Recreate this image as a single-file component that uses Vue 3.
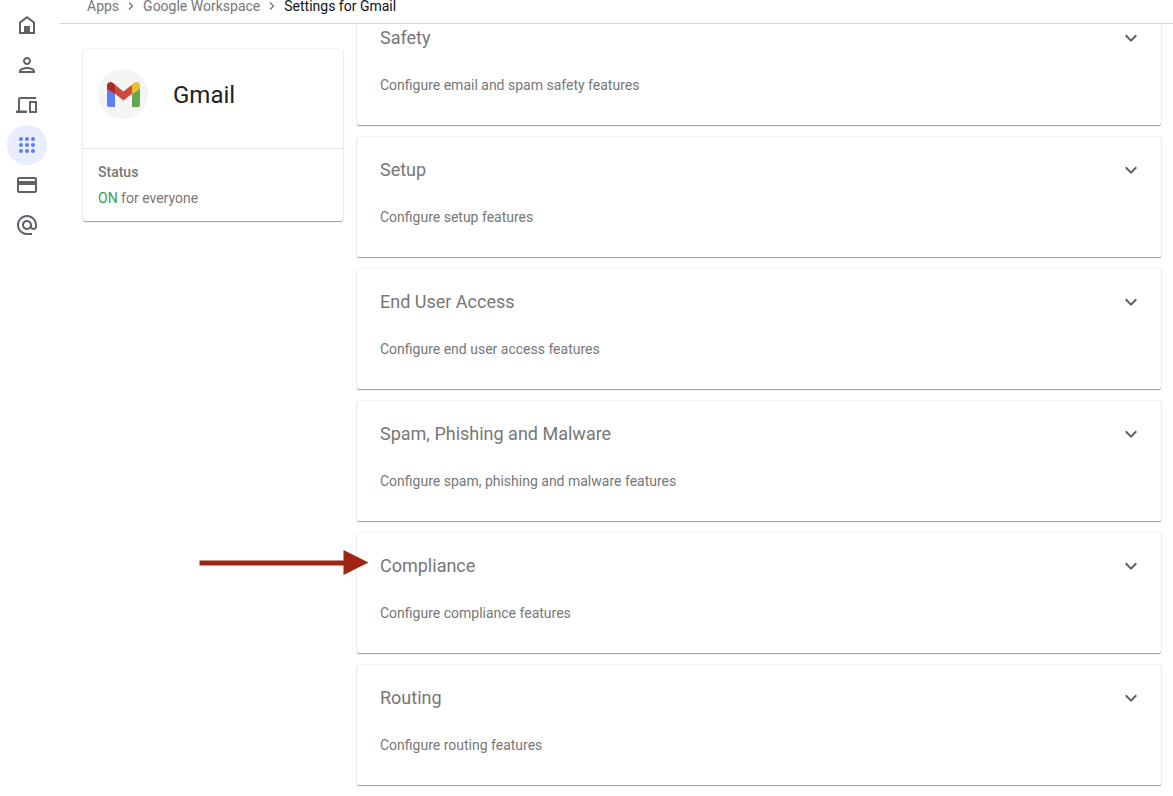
<script setup>
import { ref } from 'vue'

const navItems = [
  { label: 'Home', paths: ['M12 3L4 9v12h16V9l-8-6zm6 16h-3v-6H9v6H6v-9l6-4.500 6 4.500v9z'] },
  { label: 'Directory', paths: ['M12 6c1.100 0 2 .9 2 2s-.9 2-2 2-2-.9-2-2 .9-2 2-2m0 10c2.700 0 5.800 1.290 6 2H6c.23-.72 3.310-2 6-2m0-12C9.790 4 8 5.790 8 8s1.790 4 4 4 4-1.790 4-4-1.790-4-4-4zm0 10c-2.670 0-8 1.340-8 4v2h16v-2c0-2.660-5.330-4-8-4z'] },
  { label: 'Devices', paths: ['M5 6h16V4H5c-1.100 0-2 .9-2 2v11.500H1V20h11v-2.500H5V6zm16 2h-6c-.55 0-1 .45-1 1v10c0 .55.45 1 1 1h6c.55 0 1-.45 1-1V9c0-.55-.45-1-1-1zm-1 10h-4v-8h4v8z'] },
  { label: 'Apps', active: true },
  { label: 'Billing', paths: ['M20 4H4c-1.110 0-1.990.89-1.990 2L2 18c0 1.110.89 2 2 2h16c1.110 0 2-.89 2-2V6c0-1.110-.89-2-2-2zm0 14H4v-6h16v6zm0-10H4V6h16v2z'] },
  { label: 'Account', paths: ['M12 2C6.480 2 2 6.480 2 12s4.480 10 10 10h5v-2h-5c-4.340 0-8-3.660-8-8s3.660-8 8-8 8 3.660 8 8v1.430c0 .79-.71 1.570-1.500 1.570s-1.500-.78-1.500-1.570V12c0-2.760-2.240-5-5-5s-5 2.240-5 5 2.240 5 5 5c1.380 0 2.640-.56 3.540-1.470.65.89 1.770 1.470 2.960 1.470 1.970 0 3.500-1.600 3.500-3.570V12c0-5.520-4.480-10-10-10zm0 13c-1.660 0-3-1.340-3-3s1.340-3 3-3 3 1.340 3 3-1.340 3-3 3z'] },
]

const dots = [6, 12, 18].flatMap((cy) => [6, 12, 18].map((cx) => ({ cx, cy })))

const sections = [
  { title: 'Safety', text: 'Configure email and spam safety features' },
  { title: 'Setup', text: 'Configure setup features' },
  { title: 'End User Access', text: 'Configure end user access features' },
  { title: 'Spam, Phishing and Malware', text: 'Configure spam, phishing and malware features' },
  { title: 'Compliance', text: 'Configure compliance features', marked: true },
  { title: 'Routing', text: 'Configure routing features' },
]

const openSection = ref('')
function toggle(title) {
  openSection.value = openSection.value === title ? '' : title
}
</script>

<template>
  <div class="shell">
    <nav class="rail" aria-label="Main">
      <a v-for="item in navItems" :key="item.label" href="#" class="rail-link" :class="{ active: item.active }" :aria-label="item.label">
        <svg viewBox="0 0 24 24" class="rail-icon" aria-hidden="true">
          <template v-if="item.active">
            <circle v-for="(d, i) in dots" :key="i" :cx="d.cx" :cy="d.cy" r="2" />
          </template>
          <path v-for="p in item.paths" :key="p" :d="p" />
        </svg>
      </a>
    </nav>

    <div class="page">
      <header class="topbar">
        <nav class="crumbs" aria-label="Breadcrumb">
          <a href="#">Apps</a>
          <svg class="sep" viewBox="0 0 8 10" aria-hidden="true"><path d="M2 1.500 5.500 5 2 8.500" /></svg>
          <a href="#">Google Workspace</a>
          <svg class="sep" viewBox="0 0 8 10" aria-hidden="true"><path d="M2 1.500 5.500 5 2 8.500" /></svg>
          <span class="current">Settings for Gmail</span>
        </nav>
      </header>

      <main class="content">
        <aside class="card app-card">
          <div class="app-head">
            <div class="logo">
              <svg viewBox="0 0 33 25" aria-hidden="true">
                <path fill="#5f80f4" d="M0 6l8 6v13H2a2 2 0 0 1-2-2z" />
                <path fill="#5fa854" d="M33 6l-8 6v13h6a2 2 0 0 0 2-2z" />
                <path fill="#cf4a3c" d="M7 2l9.500 7.500L26 2v9l-9.500 7.500L7 11z" />
                <path fill="#ad2a27" d="M0 7V3.500C0 .5 3.500-1 6 1l2 1.500V12z" />
                <path fill="#edc02b" d="M33 7V3.500C33 .5 29.500-1 27 1l-2 1.500V12z" />
              </svg>
            </div>
            <h1>Gmail</h1>
          </div>
          <div class="app-status">
            <h2>Status</h2>
            <p><span class="on">ON</span> for everyone</p>
          </div>
        </aside>

        <div class="sections">
          <section v-for="s in sections" :key="s.title" class="card section">
            <button type="button" class="section-head" :aria-expanded="openSection === s.title" @click="toggle(s.title)">
              <span>{{ s.title }}</span>
              <svg viewBox="0 0 24 24" class="chevron" aria-hidden="true"><path d="M7.410 8.590 12 13.170l4.590-4.580L18 10l-6 6-6-6z" /></svg>
            </button>
            <p>{{ s.text }}</p>
            <svg v-if="s.marked" class="arrow" viewBox="0 0 170 26" aria-hidden="true">
              <path d="M.5 10.500h144V0l25 12.500-25 12.500V15.500H.5z" />
            </svg>
          </section>
        </div>
      </main>
    </div>
  </div>
</template>

<style>
body {
  margin: 0;
  background: #fff;
}
</style>

<style scoped>
.shell {
  display: flex;
  height: 100vh;
  overflow: hidden;
  font-family: Roboto, "Liberation Sans", sans-serif;
  font-size: 14px;
  line-height: 20px;
  color: #777;
}
.rail {
  flex: none;
  display: flex;
  flex-direction: column;
  width: 52px;
  padding: 5px 0 0 7px;
}
.rail-link {
  display: flex;
  align-items: center;
  justify-content: center;
  width: 40px;
  height: 40px;
  border-radius: 50%;
}
.rail-link.active {
  background: #e8eefd;
}
.rail-icon {
  width: 24px;
  height: 24px;
  fill: #5f6368;
}
.active .rail-icon {
  fill: #5b7ff5;
}
.page {
  flex: 1;
  min-width: 0;
  display: flex;
  flex-direction: column;
}
.topbar {
  flex: none;
  padding: 0 28px 11px;
  border-bottom: 1px solid #dadada;
}
.crumbs {
  display: flex;
  align-items: center;
  gap: 8px;
  line-height: 12px;
}
.crumbs a {
  color: #777;
  text-decoration: none;
}
.sep {
  width: 8px;
  height: 10px;
  fill: none;
  stroke: #757575;
  stroke-width: 1.3;
}
.crumbs .current {
  color: #111;
}
.content {
  flex: 1;
  min-height: 0;
  display: flex;
  align-items: flex-start;
  gap: 14px;
  padding: 0 12px 0 24px;
  overflow: hidden;
}
.card {
  background: #fff;
  border-radius: 2px;
  box-shadow: 0 1px 1px rgba(0, 0, 0, 0.36), 0 0 2px rgba(0, 0, 0, 0.16);
}
.app-card {
  flex: none;
  width: 260px;
  margin-top: 25px;
}
.app-head {
  display: flex;
  align-items: center;
  gap: 25px;
  padding: 20px 15px 29px;
  border-bottom: 1px solid #e4e4e4;
}
.logo {
  display: flex;
  align-items: center;
  justify-content: center;
  width: 50px;
  height: 50px;
  border-radius: 50%;
  background: #f4f4f4;
}
.logo svg {
  width: 33px;
  height: 25px;
}
h1 {
  margin: 0;
  padding-top: 2px;
  font-size: 24px;
  line-height: 32px;
  font-weight: 400;
  color: #212121;
}
.app-status {
  display: grid;
  gap: 6px;
  padding: 13px 15px;
}
h2 {
  margin: 0;
  font-size: 14px;
  line-height: 20px;
  font-weight: 500;
}
p {
  margin: 0;
}
.on {
  color: #3d9b50;
}
.sections {
  flex: 1;
  min-width: 0;
  display: flex;
  flex-direction: column;
  gap: 12px;
  margin-top: -19px;
}
.section {
  position: relative;
  padding: 21px 18px 30px 23px;
}
.section-head {
  display: flex;
  align-items: center;
  justify-content: space-between;
  width: 100%;
  margin: 0 0 25px;
  padding: 0;
  border: 0;
  background: none;
  font: inherit;
  font-size: 18px;
  line-height: 24px;
  color: #777;
  text-align: left;
  cursor: pointer;
}
.chevron {
  flex: none;
  width: 24px;
  height: 24px;
  fill: #616161;
}
.arrow {
  position: absolute;
  left: -158px;
  top: 17px;
  width: 170px;
  height: 26px;
  fill: #a02314;
}
</style>
